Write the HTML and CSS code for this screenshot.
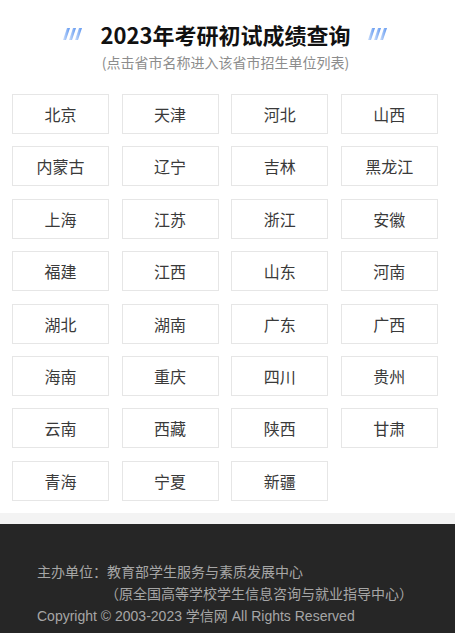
FILE: index.html
```html
<!DOCTYPE html>
<html lang="zh">
<head>
<meta charset="utf-8">
<link rel="stylesheet" href="styles.css">
</head>
<body>
<div class="page">
  <header class="head">
    <div class="title-row">
      <svg class="deco" width="20" height="12" viewBox="0 0 20 12"><defs><linearGradient id="g1" x1="0" x2="1"><stop offset="0" stop-color="#cfe0fb"/><stop offset="1" stop-color="#5c95f0"/></linearGradient></defs><g fill="url(#g1)"><polygon points="4,0 7,0 3,12 0,12"/><polygon points="10,0 13,0 9,12 6,12"/><polygon points="16,0 19,0 15,12 12,12"/></g></svg>
      <h1 class="title">2023年考研初试成绩查询</h1>
      <svg class="deco" width="20" height="12" viewBox="0 0 20 12"><defs><linearGradient id="g2" x1="0" x2="1"><stop offset="0" stop-color="#cfe0fb"/><stop offset="1" stop-color="#5c95f0"/></linearGradient></defs><g fill="url(#g2)"><polygon points="4,0 7,0 3,12 0,12"/><polygon points="10,0 13,0 9,12 6,12"/><polygon points="16,0 19,0 15,12 12,12"/></g></svg>
    </div>
    <p class="sub">(点击省市名称进入该省市招生单位列表)</p>
  </header>
  <div class="grid">
    <a class="cell">北京</a><a class="cell">天津</a><a class="cell">河北</a><a class="cell">山西</a>
    <a class="cell">内蒙古</a><a class="cell">辽宁</a><a class="cell">吉林</a><a class="cell">黑龙江</a>
    <a class="cell">上海</a><a class="cell">江苏</a><a class="cell">浙江</a><a class="cell">安徽</a>
    <a class="cell">福建</a><a class="cell">江西</a><a class="cell">山东</a><a class="cell">河南</a>
    <a class="cell">湖北</a><a class="cell">湖南</a><a class="cell">广东</a><a class="cell">广西</a>
    <a class="cell">海南</a><a class="cell">重庆</a><a class="cell">四川</a><a class="cell">贵州</a>
    <a class="cell">云南</a><a class="cell">西藏</a><a class="cell">陕西</a><a class="cell">甘肃</a>
    <a class="cell">青海</a><a class="cell">宁夏</a><a class="cell">新疆</a>
  </div>
  <div class="band"></div>
  <footer class="foot">
    <p class="f1">主办单位：教育部学生服务与素质发展中心</p>
    <p class="f2">（原全国高等学校学生信息咨询与就业指导中心）</p>
    <p class="f3">Copyright © 2003-2023 学信网 All Rights Reserved</p>
  </footer>
</div>
</body>
</html>
```
FILE: styles.css
```css
* { box-sizing: border-box; }
html, body { margin: 0; padding: 0; background: #fff; }
body { font-family: "Noto Sans CJK SC", "Noto Sans", sans-serif; }
.page { width: 455px; min-height: 633px; display: flex; flex-direction: column; }
.head { padding-top: 19px; display: flex; flex-direction: column; align-items: center; }
.title-row { display: flex; align-items: center; gap: 18px; padding-right: 4px; }
.title { margin: 0; font-size: 22px; font-weight: 700; color: #111; line-height: 30px; letter-spacing: 0; }
.deco { display: block; }
.sub { margin: 3px 0 0; font-size: 14px; color: #8c8c8c; line-height: 20px; padding-right: 4px; }
.grid { margin: 22px 0 0 12px; width: 425px; display: grid; grid-template-columns: repeat(4, 97px); column-gap: 12.6px; row-gap: 12.4px; }
.cell { height: 40px; border: 1px solid #e6e6e6; display: flex; align-items: center; justify-content: center; font-size: 16px; color: #3a3a3a; text-decoration: none; }
.band { margin-top: 12px; height: 11px; background: #f3f3f3; }
.foot { flex: 1; background: #262626; padding: 36px 0 0 37px; color: #a6a6a6; font-size: 14px; }
.foot p { margin: 0; line-height: 22.5px; white-space: nowrap; }
.f2 { padding-left: 68px; }
.f3 { font-family: "Liberation Sans", "Noto Sans CJK SC", sans-serif; font-size: 14px; }
```
